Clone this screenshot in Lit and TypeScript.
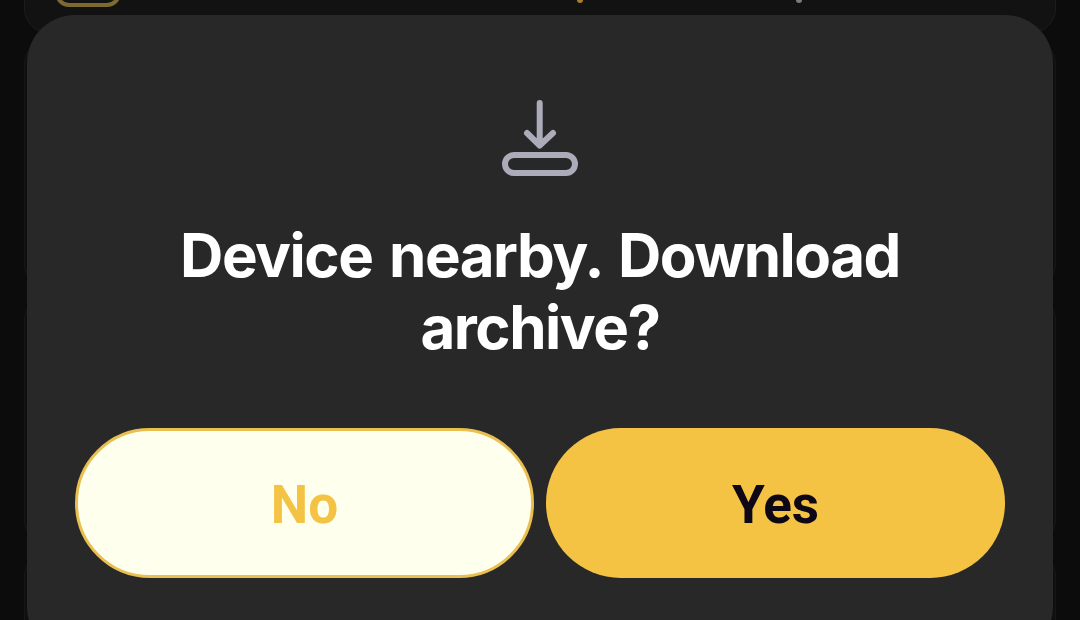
import { LitElement, html, css } from "lit";
import { customElement } from "lit/decorators.js";

@customElement("app-root")
export class AppRoot extends LitElement {
  static styles = css`
    :host { display: block; width: 1080px; height: 620px; overflow: hidden; position: relative; background: #0c0c0c; font-family: Inter, "Liberation Sans", sans-serif; }
    .backdrop { display: flex; flex-direction: column; gap: 6px; margin: -60px 24px 0; }
    .card { height: 93px; box-sizing: border-box; border: 1px solid #1c1c1c; border-radius: 24px; background: #121212; display: flex; align-items: flex-end; padding: 0 30px 25px; gap: 20px; }
    .card.tall { height: 250px; background: #0f0f0f; border-color: #161616; }
    .thumb { width: 66px; height: 40px; box-sizing: border-box; border: 4px solid #7d6a31; border-radius: 14px; }
    .ghost { position: relative; flex: 1; height: 10px; }
    .tick { position: absolute; top: 3px; width: 6px; height: 3px; border-radius: 0 0 3px 3px; }
    .tick.gold { left: 436px; background: #a47f2c; }
    .tick.grey { left: 655px; background: #7c7c7c; }
    .modal { position: absolute; left: 27px; top: 15px; width: 1026px; height: 640px; box-sizing: border-box; background: #282828; border-radius: 48px; padding: 85px 48px 0; display: flex; flex-direction: column; align-items: center; }
    .icon { width: 80px; height: 80px; display: block; }
    h1 { margin: 39px 0 0; width: 800px; text-align: center; color: #fff; font-size: 60px; line-height: 72px; font-weight: 700; letter-spacing: -1.5px; word-spacing: 4px; }
    .actions { align-self: stretch; display: grid; grid-template-columns: 1fr 1fr; gap: 12px; margin-top: 65px; }
    button { height: 150px; box-sizing: border-box; border-radius: 75px; font-family: Roboto, sans-serif; font-weight: 700; font-size: 53px; padding: 3px 0 0; }
    .no { background: #ffffee; border: 3px solid #e9bf50; color: #f4c344; }
    .yes { background: #f5c344; border: 0; color: #0e0716; }
  `;

  render() {
    return html`
      <div class="backdrop">
        <div class="card">
          <div class="thumb"></div>
          <div class="ghost"><span class="tick gold"></span><span class="tick grey"></span></div>
        </div>
        <div class="card tall"></div>
        <div class="card tall"></div>
        <div class="card tall"></div>
      </div>
      <section class="modal">
        <svg class="icon" viewBox="0 0 80 80" fill="none" stroke="#acabb9" stroke-linecap="round" stroke-linejoin="round">
          <path d="M39.700 3V45.500M27 33L39.700 45.500L53 33" stroke-width="6"></path>
          <rect x="5" y="55" width="70" height="18" rx="9" stroke-width="6"></rect>
        </svg>
        <h1>Device nearby. Download archive?</h1>
        <div class="actions">
          <button class="no">No</button>
          <button class="yes">Yes</button>
        </div>
      </section>
    `;
  }
}
